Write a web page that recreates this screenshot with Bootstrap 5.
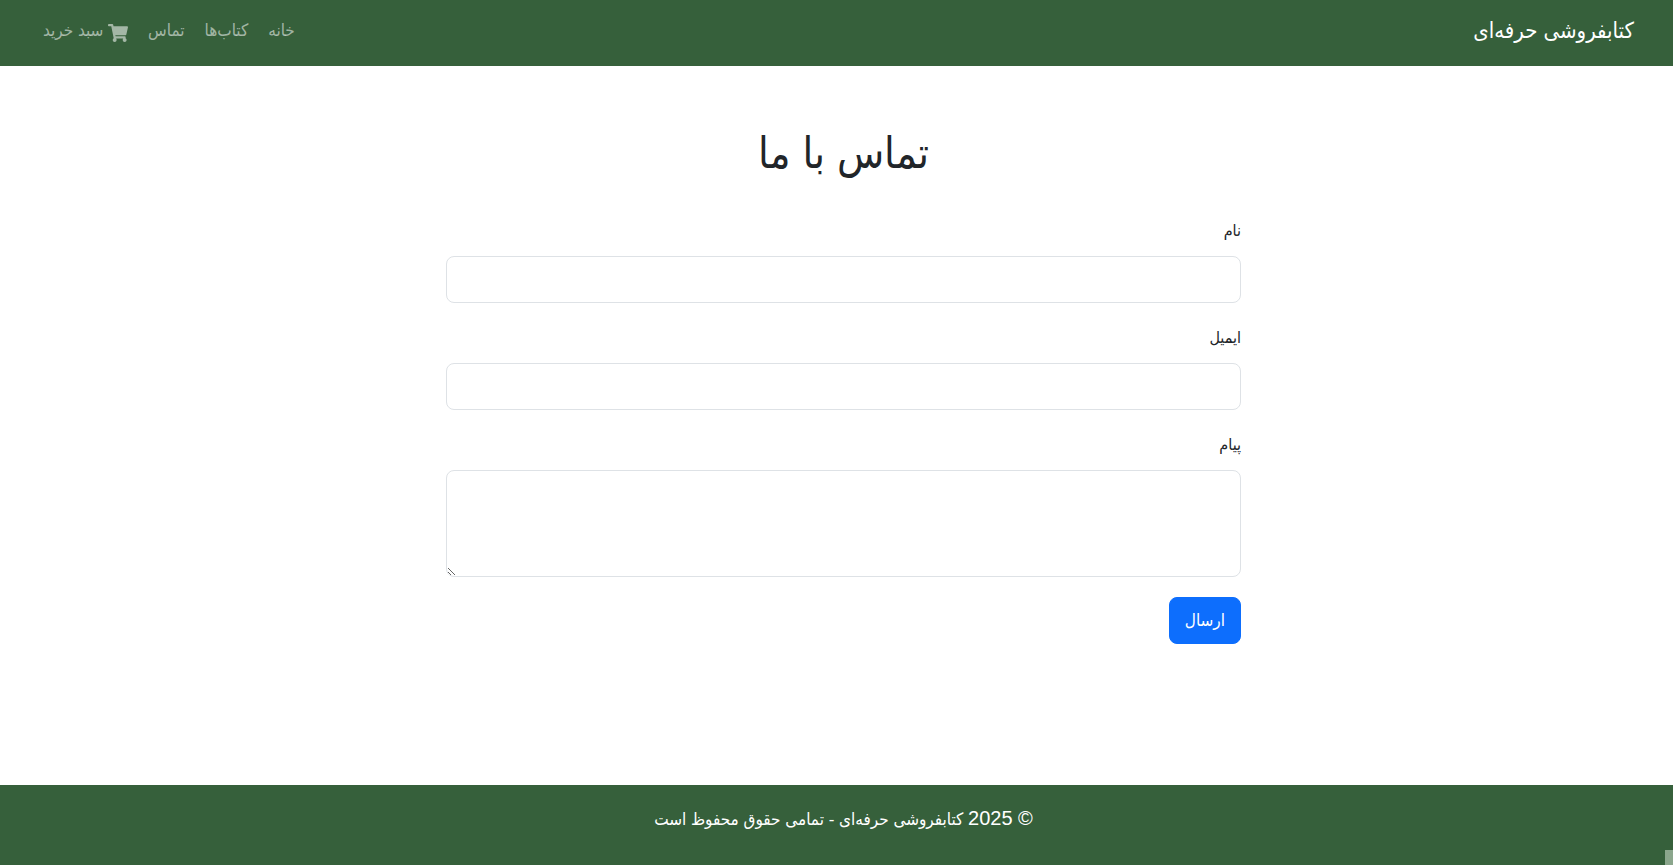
<!DOCTYPE html>
<html lang="fa" dir="rtl">
<head>
<meta charset="utf-8">
<meta name="viewport" content="width=device-width, initial-scale=1">
<title>تماس با ما</title>
<link rel="stylesheet" href="https://cdn.jsdelivr.net/npm/bootstrap@5.3.0/dist/css/bootstrap.min.css">
<style>
html { font-size: 20px; }
body { font-family: "Liberation Sans", "DejaVu Sans Condensed", "DejaVu Sans", sans-serif; font-size: 17px; line-height: 30px; }
.site-green { background-color: #36603b; }
.site-nav { padding: 6px 39px 10px 33px; min-height: 66px; }
.site-nav .navbar-brand { font-size: 22px; margin: 0; padding: 0; }
.site-nav .nav-link { padding: 10px; color: rgba(255, 255, 255, .55); }
.cart-icon { vertical-align: -6px; }
.contact-main { padding: 60px 0 60px 14px; }
.contact-title { font-size: 43px; line-height: 54px; margin-bottom: 36px; }
.contact-form { max-width: 795px; }
.contact-form .form-label { display: table; font-size: 16px; margin-bottom: 10px; }
.contact-form .form-control { border-radius: 8px; }
.contact-form input.form-control { height: 47px; }
.contact-form textarea.form-control { height: 107px; }
.contact-form .field-row { margin-bottom: 20px; }
.contact-form .btn { height: 47px; padding: 7px 15px; border-radius: 8px; font-size: 17px; }
.site-footer { padding: 20px 0 30px 14px; }
.footer-year { font-size: 20px; line-height: 20px; }
.corner-tab { width: 8px; height: 15px; background: #8ba68c; }
</style>
</head>
<body class="min-vh-100 d-flex flex-column bg-white">
<nav class="navbar navbar-expand navbar-dark site-green site-nav">
  <a class="navbar-brand" href="#">کتابفروشی حرفه‌ای</a>
  <ul class="navbar-nav me-auto p-0">
    <li class="nav-item"><a class="nav-link" href="#">خانه</a></li>
    <li class="nav-item"><a class="nav-link" href="#">کتاب‌ها</a></li>
    <li class="nav-item"><a class="nav-link" href="#">تماس</a></li>
    <li class="nav-item"><a class="nav-link" href="#"><svg class="cart-icon" width="20" height="18" viewBox="0 0 576 512" fill="currentColor" aria-hidden="true"><path d="M528.12 301.319l47.273-208C578.806 78.301 567.391 64 551.99 64H159.208l-9.166-44.81C147.758 8.021 137.93 0 126.529 0H24C10.745 0 0 10.745 0 24v16c0 13.255 10.745 24 24 24h69.883l70.248 343.435C147.325 417.1 136 435.222 136 456c0 30.928 25.072 56 56 56s56-25.072 56-56c0-15.674-6.447-29.835-16.824-40h209.647C430.447 426.165 424 440.326 424 456c0 30.928 25.072 56 56 56s56-25.072 56-56c0-22.172-12.888-41.332-31.579-50.405l5.517-24.276c3.413-15.018-8.002-29.319-23.403-29.319H218.117l-6.545-32h293.145c11.206 0 20.92-7.754 23.403-18.681z"/></svg> سبد خرید</a></li>
  </ul>
</nav>
<main class="contact-main flex-grow-1">
  <h1 class="contact-title text-center fw-normal">تماس با ما</h1>
  <form class="contact-form mx-auto">
    <div class="field-row"><label class="form-label" for="name">نام</label><input class="form-control" type="text" id="name"></div>
    <div class="field-row"><label class="form-label" for="email">ایمیل</label><input class="form-control" type="email" id="email"></div>
    <div class="field-row"><label class="form-label" for="message">پیام</label><textarea class="form-control" id="message" rows="3"></textarea></div>
    <button class="btn btn-primary" type="submit">ارسال</button>
  </form>
</main>
<footer class="site-green site-footer text-white text-center position-relative">
  <p class="m-0"><span class="footer-year">© 2025</span> کتابفروشی حرفه‌ای - تمامی حقوق محفوظ است</p>
  <span class="corner-tab position-absolute bottom-0 end-0"></span>
</footer>
<script src="https://cdn.jsdelivr.net/npm/bootstrap@5.3.0/dist/js/bootstrap.bundle.min.js"></script>
</body>
</html>
